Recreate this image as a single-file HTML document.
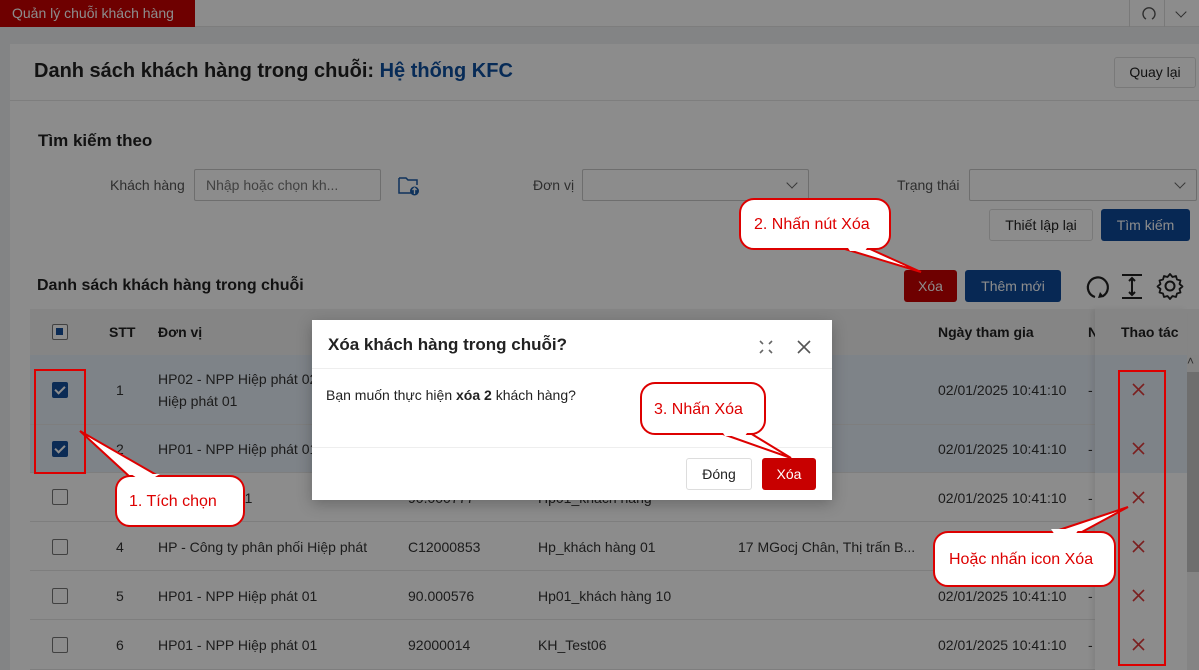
<!DOCTYPE html>
<html><head><meta charset="utf-8">
<style>
*{box-sizing:border-box;margin:0;padding:0}
body{width:1199px;height:670px;overflow:hidden;position:relative;font-family:"Liberation Sans",Arial,sans-serif;background:#eef0f3;color:#222;font-size:14px}
.a{position:absolute}
.topbar{left:0;top:0;width:1199px;height:27px;background:#fff;border-bottom:1px solid #e4e4e4}
.tab{left:0;top:0;width:195px;height:27px;background:#c80000;color:#fff;font-size:14px;line-height:26px;padding-left:12px}
.panel{left:10px;top:44px;width:1189px;height:626px;background:#fff}
.btn{position:absolute;border-radius:3px;font-size:14px;text-align:center}
.inp{position:absolute;border:1px solid #c8c8c8;border-radius:2px;background:#fff;height:32px}
.chev{position:absolute;right:12px;top:9px;width:8px;height:8px;border-right:1.3px solid #666;border-bottom:1.3px solid #666;transform:rotate(45deg)}
.cb{position:absolute;width:16px;height:16px;border:1.5px solid #777;border-radius:2px;background:#fff}
.cb.on{background:#154f9c;border-color:#154f9c}
.cb.on:after{content:"";position:absolute;left:4px;top:1px;width:4px;height:8px;border-right:2px solid #fff;border-bottom:2px solid #fff;transform:rotate(45deg)}
.row{position:absolute;left:30px;width:1169px;border-bottom:1px solid #e6e6e6;background:#fff}
.row.sel{background:#e6eef7}
.t{position:absolute;font-size:14px;color:#333;white-space:nowrap}
.x{position:absolute;left:1131px;font-size:20px;color:#d23;font-weight:normal}
.ov{left:0;top:0;width:1199px;height:670px;background:rgba(0,0,0,0.45)}
</style></head><body>
<div class="a topbar"></div>
<div class="a tab">Quản lý chuỗi khách hàng</div>
<div class="a" style="left:1129px;top:0;width:1px;height:27px;background:#ddd"></div>
<div class="a" style="left:1164px;top:0;width:1px;height:27px;background:#ddd"></div>
<svg class="a" style="left:1141px;top:6px" width="16" height="16" viewBox="0 0 16 16"><path d="M5 13 A6 6 0 1 1 11 13" fill="none" stroke="#555" stroke-width="1.4"/></svg>
<div class="a" style="left:1177px;top:8px;width:8px;height:8px;border-right:1.3px solid #555;border-bottom:1.3px solid #555;transform:rotate(45deg)"></div>

<div class="a panel"></div>
<div class="a" style="left:34px;top:60px;font-size:20px;font-weight:bold;color:#222">Danh sách khách hàng trong chuỗi: <span style="color:#0d4f9e">Hệ thống KFC</span></div>
<div class="btn" style="left:1114px;top:57px;width:82px;height:31px;border:1px solid #ddd;line-height:29px;color:#222;background:#fff">Quay lại</div>
<div class="a" style="left:10px;top:100px;width:1189px;height:1px;background:#e6e6e6"></div>

<div class="a" style="left:38px;top:131px;font-size:17px;font-weight:bold">Tìm kiếm theo</div>
<div class="t" style="left:110px;top:177px;color:#555">Khách hàng</div>
<div class="inp" style="left:194px;top:169px;width:187px"><span class="t" style="left:11px;top:7px;color:#777">Nhập hoặc chọn kh...</span></div>
<svg class="a" style="left:398px;top:175px" width="24" height="22" viewBox="0 0 24 22"><path d="M1 3h7l2 2h9v5M1 3v15h12" fill="none" stroke="#1a5ca8" stroke-width="1.5"/><circle cx="16.5" cy="16" r="4.5" fill="#1a5ca8"/><path d="M16.5 19v-6M14.5 15l2-2 2 2" stroke="#fff" stroke-width="1.3" fill="none"/></svg>
<div class="t" style="left:533px;top:177px;color:#555">Đơn vị</div>
<div class="inp" style="left:582px;top:169px;width:227px"><div class="chev"></div></div>
<div class="t" style="left:897px;top:177px;color:#555">Trạng thái</div>
<div class="inp" style="left:969px;top:169px;width:228px"><div class="chev"></div></div>
<div class="btn" style="left:989px;top:209px;width:104px;height:32px;border:1px solid #ddd;line-height:30px;background:#fff">Thiết lập lại</div>
<div class="btn" style="left:1101px;top:209px;width:89px;height:32px;background:#0d4a9a;color:#fff;line-height:32px">Tìm kiếm</div>

<div class="a" style="left:37px;top:277px;font-size:16px;font-weight:bold">Danh sách khách hàng trong chuỗi</div>
<div class="btn" style="left:904px;top:270px;width:53px;height:32px;background:#c80000;color:#fff;line-height:32px">Xóa</div>
<div class="btn" style="left:965px;top:270px;width:96px;height:32px;background:#0d4a9a;color:#fff;line-height:32px">Thêm mới</div>
<svg class="a" style="left:1084px;top:272px" width="100" height="30" viewBox="0 0 100 30"><path d="M11 25 A10 10 0 1 1 19 24" fill="none" stroke="#222" stroke-width="2.2"/><path d="M16 20l4 5-6 1z" fill="#222"/><path d="M38 3h20M38 26h20M48 6v17M45 9l3-3 3 3M45 20l3 3 3-3" stroke="#222" stroke-width="2" fill="none"/><circle cx="86" cy="14" r="4.5" fill="none" stroke="#222" stroke-width="2"/><path d="M86 2l2.5 3 3.5-1 1 3.5 3.5 1-1 3.5 3 2.5-3 2.5 1 3.5-3.5 1-1 3.5-3.5-1-2.5 3-2.5-3-3.5 1-1-3.5-3.5-1 1-3.5-3-2.5 3-2.5-1-3.5 3.5-1 1-3.5 3.5 1z" fill="none" stroke="#222" stroke-width="1.8" stroke-linejoin="round"/></svg>

<!-- table header -->
<div class="a" style="left:30px;top:309px;width:1169px;height:46px;background:#f3f3f3"></div>
<div class="cb" style="left:52px;top:324px;background:#fff"><div style="position:absolute;left:3px;top:3px;width:7px;height:7px;background:#154f9c"></div></div>
<div class="t" style="left:109px;top:324px;font-weight:bold;color:#222">STT</div>
<div class="t" style="left:158px;top:324px;font-weight:bold;color:#222">Đơn vị</div>
<div class="t" style="left:938px;top:324px;font-weight:bold;color:#222">Ngày tham gia</div>
<div class="t" style="left:1088px;top:324px;font-weight:bold;color:#222">Ng</div>

<div class="row sel" style="top:355px;height:70px"></div>
<div class="row sel" style="top:425px;height:48px"></div>
<div class="row" style="top:473px;height:49px"></div>
<div class="row" style="top:522px;height:49px"></div>
<div class="row" style="top:571px;height:49px"></div>
<div class="row" style="top:620px;height:50px"></div>
<!-- sticky action column -->
<div class="a" style="left:1095px;top:309px;width:92px;height:361px;background:#fff;box-shadow:-3px 0 5px rgba(0,0,0,.08)"></div>
<div class="a" style="left:1095px;top:309px;width:92px;height:46px;background:#f3f3f3"></div>
<div class="a" style="left:1095px;top:355px;width:92px;height:118px;background:#e6eef7"></div>
<div class="t" style="left:1121px;top:324px;font-weight:bold;color:#222">Thao tác</div>
<div class="a" style="left:1187px;top:355px;width:12px;height:315px;background:#f1f1f1"></div>
<div class="a" style="left:1187px;top:372px;width:12px;height:200px;background:#c9c9c9"></div>
<div class="t" style="left:1187px;top:354px;font-size:12px;color:#555">˄</div>

<div class="cb on" style="left:52px;top:382px"></div>
<div class="cb on" style="left:52px;top:441px"></div>
<div class="cb" style="left:52px;top:489px"></div>
<div class="cb" style="left:52px;top:539px"></div>
<div class="cb" style="left:52px;top:588px"></div>
<div class="cb" style="left:52px;top:637px"></div>

<div class="t" style="left:116px;top:382px">1</div>
<div class="t" style="left:158px;top:371px">HP02 - NPP Hiệp phát 02</div>
<div class="t" style="left:158px;top:393px">Hiệp phát 01</div>
<div class="t" style="left:116px;top:441px">2</div>
<div class="t" style="left:158px;top:441px">HP01 - NPP Hiệp phát 01</div>
<div class="t" style="left:741px;top:441px">, Phường Li...</div>
<div class="t" style="left:116px;top:490px">3</div>
<div class="t" style="left:158px;top:490px">HP01 - NPP 11</div>
<div class="t" style="left:408px;top:490px">90.000777</div>
<div class="t" style="left:538px;top:490px">Hp01_khách hàng</div>
<div class="t" style="left:116px;top:539px">4</div>
<div class="t" style="left:158px;top:539px">HP - Công ty phân phối Hiệp phát</div>
<div class="t" style="left:408px;top:539px">C12000853</div>
<div class="t" style="left:538px;top:539px">Hp_khách hàng 01</div>
<div class="t" style="left:738px;top:539px">17 MGocj Chân, Thị trấn B...</div>
<div class="t" style="left:116px;top:588px">5</div>
<div class="t" style="left:158px;top:588px">HP01 - NPP Hiệp phát 01</div>
<div class="t" style="left:408px;top:588px">90.000576</div>
<div class="t" style="left:538px;top:588px">Hp01_khách hàng 10</div>
<div class="t" style="left:116px;top:637px">6</div>
<div class="t" style="left:158px;top:637px">HP01 - NPP Hiệp phát 01</div>
<div class="t" style="left:408px;top:637px">92000014</div>
<div class="t" style="left:538px;top:637px">KH_Test06</div>
<div class="t" style="left:938px;top:382px">02/01/2025 10:41:10</div>
<div class="t" style="left:938px;top:441px">02/01/2025 10:41:10</div>
<div class="t" style="left:938px;top:490px">02/01/2025 10:41:10</div>
<div class="t" style="left:938px;top:539px">02/01/2025 10:41:10</div>
<div class="t" style="left:938px;top:588px">02/01/2025 10:41:10</div>
<div class="t" style="left:938px;top:637px">02/01/2025 10:41:10</div>
<div class="t" style="left:1088px;top:382px">-</div><div class="t" style="left:1088px;top:441px">-</div><div class="t" style="left:1088px;top:490px">-</div><div class="t" style="left:1088px;top:539px">-</div><div class="t" style="left:1088px;top:588px">-</div><div class="t" style="left:1088px;top:637px">-</div>
<svg class="a" style="left:0;top:0" width="1199" height="670"><g stroke="#e03a3a" stroke-width="1.6"><path d="M1133 384l11 11M1144 384l-11 11M1133 443l11 11M1144 443l-11 11M1133 492l11 11M1144 492l-11 11M1133 541l11 11M1144 541l-11 11M1133 590l11 11M1144 590l-11 11M1133 639l11 11M1144 639l-11 11"/></g></svg>

<div class="a ov"></div>

<!-- modal -->
<div class="a" style="left:312px;top:320px;width:520px;height:180px;background:#fff;box-shadow:0 4px 14px rgba(0,0,0,.25)">
 <div class="t" style="left:16px;top:15px;font-size:17px;font-weight:bold;color:#222">Xóa khách hàng trong chuỗi?</div>
 <svg class="a" style="left:446px;top:19px" width="16" height="16" viewBox="0 0 16 16"><path d="M2 2l3 3M14 2l-3 3M2 14l3-3M14 14l-3-3" stroke="#666" stroke-width="1.6"/></svg>
 <svg class="a" style="left:484px;top:19px" width="16" height="16" viewBox="0 0 16 16"><path d="M2 2l12 12M14 2L2 14" stroke="#555" stroke-width="1.6"/></svg>
 <div class="a" style="left:0;top:48px;width:520px;height:1px;background:#eee"></div>
 <div class="t" style="left:14px;top:67px;color:#222">Bạn muốn thực hiện <b>xóa 2</b> khách hàng?</div>
 <div class="a" style="left:0;top:127px;width:520px;height:1px;background:#eee"></div>
 <div class="btn" style="left:374px;top:138px;width:66px;height:32px;border:1px solid #ddd;line-height:30px;background:#fff;color:#222">Đóng</div>
 <div class="btn" style="left:450px;top:138px;width:54px;height:32px;background:#c80000;color:#fff;line-height:32px">Xóa</div>
</div>

<!-- annotations -->
<svg class="a" style="left:0;top:0" width="1199" height="670" font-family="Liberation Sans, Arial, sans-serif">
<g fill="none" stroke="#d00" stroke-width="2">
<rect x="35" y="370" width="50" height="103"/>
<rect x="1119" y="371" width="46" height="294"/>
</g>
<g fill="#fff" stroke="#d00" stroke-width="2">
<path d="M130 477 L80 431 L160 477"/>
<rect x="116" y="476" width="128" height="50" rx="14"/>
<path d="M845 249 L921 272 L870 249"/>
<rect x="740" y="199" width="150" height="50" rx="14"/>
<path d="M720 433 L791 458 L750 433"/>
<rect x="641" y="383" width="124" height="51" rx="14"/>
<path d="M1050 533 L1128 507 L1080 533"/>
<rect x="934" y="532" width="181" height="54" rx="14"/>
</g>
<g fill="#fff">
<path d="M131 474 L160 474 L150 480 L140 480z"/>
<path d="M846 245 L869 245 L865 251 L850 251z"/>
<path d="M721 430 L749 430 L745 436 L725 436z"/>
<path d="M1051 529 L1079 529 L1075 535 L1055 535z"/>
</g>
<g fill="#d00" font-size="16">
<text x="129" y="506">1. Tích chọn</text>
<text x="754" y="229">2. Nhấn nút Xóa</text>
<text x="654" y="414">3. Nhấn Xóa</text>
<text x="949" y="564">Hoặc nhấn icon Xóa</text>
</g>
</svg>
</body></html>
